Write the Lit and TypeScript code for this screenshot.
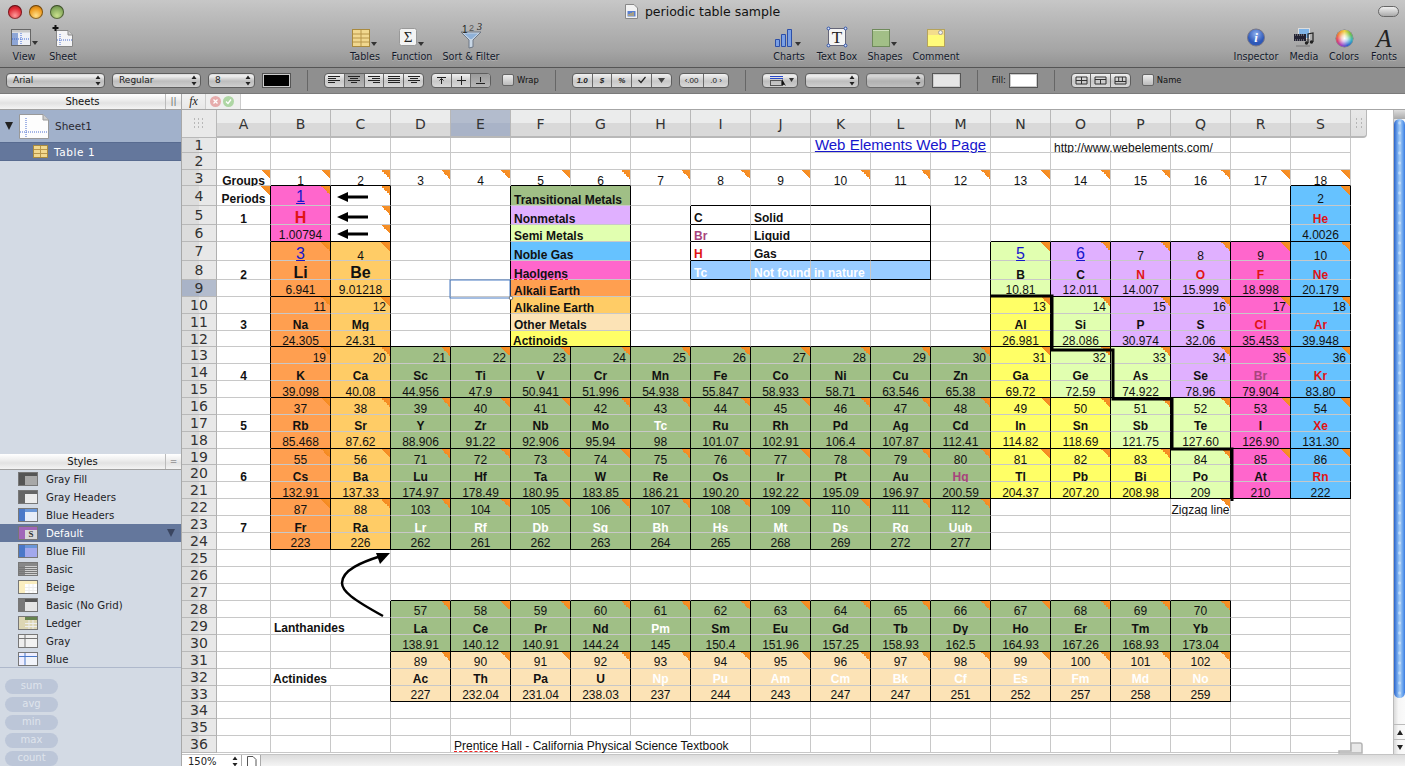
import { LitElement, html, css, svg } from "lit";
import { customElement } from "lit/decorators.js";

type El = [string, string, string, string?];
// sym, mass, bg, symbol colour
const P = "bg-pink", O = "bg-orange", E = "bg-earth", G = "bg-green", V = "bg-purple", S = "bg-semi", N = "bg-noble", Y = "bg-yellow", B = "bg-beige";

interface Cell { text?: unknown; cls?: string; span?: number; tri?: boolean }

// line box height per sheet row: the text of the original sits a little differently in each row
const ROW_LH: Record<number, number> = {
  1: 8, 3: 8, 4: 12, 5: 10, 6: 12, 7: 8, 8: 8, 9: 12, 10: 12, 11: 10, 12: 10, 13: 10, 14: 8, 15: 10, 16: 10, 17: 10, 18: 12,
  19: 8, 20: 8, 21: 10, 22: 10, 23: 8, 24: 12, 28: 12, 29: 10, 30: 12, 31: 12, 32: 12, 33: 12, 36: 12,
};

function buildCells() {
  const cells = new Map<string, Cell>();
  const covered = new Set<string>();
  const br = new Set<string>();
  const bb = new Set<string>();
  const k = (r: number, c: number) => r + ":" + c;
  const put = (r: number, c: number, cell: Cell) => {
    cells.set(k(r, c), cell);
    for (let i = 1; i < (cell.span || 1); i++) covered.add(k(r, c + i));
  };
  const box = (r0: number, r1: number, c0: number, c1: number) => {
    for (let c = c0; c <= c1; c++) { bb.add(k(r0 - 1, c)); bb.add(k(r1, c)); }
    for (let r = r0; r <= r1; r++) { br.add(k(r, c0 - 1)); br.add(k(r, c1)); }
  };
  const element = (r: number, c: number, num: number, e: El, opt: { right?: boolean; link?: boolean; big?: boolean } = {}) => {
    const [sym, mass, bg, col] = e;
    const numCls = `${bg} ${opt.right ? "end" : ""}`;
    const numText = opt.link ? html`<span class="link">${num}</span>` : num;
    put(r, c, { text: numText, cls: numCls, tri: true });
    put(r + 1, c, { text: sym, cls: `${bg} sym ${opt.big ? "big" : ""} ${col || ""}` });
    put(r + 2, c, { text: mass, cls: bg });
    box(r, r + 2, c, c);
  };

  // top rows
  put(1, 10, { text: html`<span class="link web">Web Elements Web Page</span>`, span: 3 });
  put(1, 14, { text: "http://www.webelements.com/", span: 3, cls: "left" });
  put(3, 0, { text: "Groups", cls: "sym", tri: true });
  for (let i = 1; i <= 18; i++) put(3, i, { text: i, tri: true });
  put(4, 0, { text: "Periods", cls: "sym", tri: true });
  [1, 2, 3, 4, 5, 6, 7].forEach((p, i) => put([5, 8, 11, 14, 17, 20, 23][i], 0, { text: p, cls: "sym" }));

  // arrows' cells
  [4, 5, 6].forEach((r) => put(r, 2, { tri: true }));
  box(4, 6, 2, 2);

  // period 1
  put(4, 1, { text: html`<span class="link">1</span>`, cls: `${P} up`, tri: true });
  put(5, 1, { text: "H", cls: `${P} sym big red` });
  put(6, 1, { text: "1.00794", cls: P });
  box(4, 6, 1, 1);
  element(4, 18, 2, ["He", "4.0026", N, "red"]);

  // period 2
  element(7, 1, 3, ["Li", "6.941", O], { link: true, big: true });
  element(7, 2, 4, ["Be", "9.01218", E], { big: true });
  element(7, 13, 5, ["B", "10.81", S], { link: true });
  element(7, 14, 6, ["C", "12.011", V], { link: true });
  element(7, 15, 7, ["N", "14.007", V, "red"]);
  element(7, 16, 8, ["O", "15.999", V, "red"]);
  element(7, 17, 9, ["F", "18.998", P, "red"]);
  element(7, 18, 10, ["Ne", "20.179", N, "red"]);

  // period 3
  element(10, 1, 11, ["Na", "24.305", O], { right: true });
  element(10, 2, 12, ["Mg", "24.31", E], { right: true });
  const p3: [number, El][] = [
    [13, ["Al", "26.981", Y]], [14, ["Si", "28.086", S]], [15, ["P", "30.974", V]],
    [16, ["S", "32.06", V]], [17, ["Cl", "35.453", P, "red"]], [18, ["Ar", "39.948", N, "red"]],
  ];
  p3.forEach(([c, e], i) => element(10, c, 13 + i, e, { right: true }));

  // period 4
  const p4: El[] = [
    ["K", "39.098", O], ["Ca", "40.08", E], ["Sc", "44.956", G], ["Ti", "47.9", G], ["V", "50.941", G], ["Cr", "51.996", G],
    ["Mn", "54.938", G], ["Fe", "55.847", G], ["Co", "58.933", G], ["Ni", "58.71", G], ["Cu", "63.546", G], ["Zn", "65.38", G],
    ["Ga", "69.72", Y], ["Ge", "72.59", S], ["As", "74.922", S], ["Se", "78.96", V], ["Br", "79.904", P, "mag"], ["Kr", "83.80", N, "red"],
  ];
  p4.forEach((e, i) => element(13, i + 1, 19 + i, e, { right: true }));

  // period 5
  const p5: El[] = [
    ["Rb", "85.468", O], ["Sr", "87.62", E], ["Y", "88.906", G], ["Zr", "91.22", G], ["Nb", "92.906", G], ["Mo", "95.94", G],
    ["Tc", "98", G, "white"], ["Ru", "101.07", G], ["Rh", "102.91", G], ["Pd", "106.4", G], ["Ag", "107.87", G], ["Cd", "112.41", G],
    ["In", "114.82", Y], ["Sn", "118.69", Y], ["Sb", "121.75", S], ["Te", "127.60", S], ["I", "126.90", P], ["Xe", "131.30", N, "red"],
  ];
  p5.forEach((e, i) => element(16, i + 1, 37 + i, e));

  // period 6
  const p6: El[] = [
    ["Cs", "132.91", O], ["Ba", "137.33", E], ["Lu", "174.97", G], ["Hf", "178.49", G], ["Ta", "180.95", G], ["W", "183.85", G],
    ["Re", "186.21", G], ["Os", "190.20", G], ["Ir", "192.22", G], ["Pt", "195.09", G], ["Au", "196.97", G], ["Hg", "200.59", G, "mag"],
    ["Tl", "204.37", Y], ["Pb", "207.20", Y], ["Bi", "208.98", Y], ["Po", "209", S], ["At", "210", P], ["Rn", "222", N, "red"],
  ];
  const n6 = [55, 56, 71, 72, 73, 74, 75, 76, 77, 78, 79, 80, 81, 82, 83, 84, 85, 86];
  p6.forEach((e, i) => element(19, i + 1, n6[i], e));

  // period 7
  const p7: El[] = [
    ["Fr", "223", O], ["Ra", "226", E], ["Lr", "262", G, "white"], ["Rf", "261", G, "white"], ["Db", "262", G, "white"], ["Sg", "263", G, "white"],
    ["Bh", "264", G, "white"], ["Hs", "265", G, "white"], ["Mt", "268", G, "white"], ["Ds", "269", G, "white"], ["Rg", "272", G, "white"], ["Uub", "277", G, "white"],
  ];
  const n7 = [87, 88, 103, 104, 105, 106, 107, 108, 109, 110, 111, 112];
  p7.forEach((e, i) => element(22, i + 1, n7[i], e));
  put(22, 16, { text: "Zigzag line", tri: true });

  // lanthanides & actinides
  put(29, 1, { text: "Lanthanides", cls: "sym left leg14", span: 2 });
  put(32, 1, { text: "Actinides", cls: "sym left tight", span: 2 });
  const lan: El[] = [
    ["La", "138.91", G], ["Ce", "140.12", G], ["Pr", "140.91", G], ["Nd", "144.24", G], ["Pm", "145", G, "white"], ["Sm", "150.4", G], ["Eu", "151.96", G],
    ["Gd", "157.25", G], ["Tb", "158.93", G], ["Dy", "162.5", G], ["Ho", "164.93", G], ["Er", "167.26", G], ["Tm", "168.93", G], ["Yb", "173.04", G],
  ];
  lan.forEach((e, i) => element(28, i + 3, 57 + i, e));
  const act: El[] = [
    ["Ac", "227", B], ["Th", "232.04", B], ["Pa", "231.04", B], ["U", "238.03", B], ["Np", "237", B, "white"], ["Pu", "244", B, "white"], ["Am", "243", B, "white"],
    ["Cm", "247", B, "white"], ["Bk", "247", B, "white"], ["Cf", "251", B, "white"], ["Es", "252", B, "white"], ["Fm", "257", B, "white"], ["Md", "258", B, "white"], ["No", "259", B, "white"],
  ];
  act.forEach((e, i) => element(31, i + 3, 89 + i, e));

  // legend
  const legend: [string, string][] = [
    ["Transitional Metals", G], ["Nonmetals", V], ["Semi Metals", S], ["Noble Gas", N], ["Haolgens", P],
    ["Alkali Earth", O], ["Alkaline Earth", E], ["Other Metals", B], ["Actinoids", Y],
  ];
  legend.forEach(([t, bg], i) => {
    const content = t === "Haolgens" ? html`<span class="spell">${t}</span>` : t;
    put(4 + i, 5, { text: content, cls: `${bg} sym left leg ${t === "Actinoids" ? "tight" : ""}`, span: 2 });
  });
  box(4, 12, 5, 6);

  // state key
  const key: [string, string, string][] = [["C", "Solid", ""], ["Br", "Liquid", "mag"], ["H", "Gas", "red"], ["Tc", "Not found in nature", "white"]];
  key.forEach(([a, b, col], i) => {
    const r = 5 + i;
    const fill = i === 3 ? "bg-sky" : "";
    const lh = i === 1 ? "leg" : "leg14";
    put(r, 8, { text: a, cls: `sym left ${lh} ${col} ${fill}` });
    put(r, 9, { text: b, cls: `sym left ${lh} ${i === 3 ? "white" : ""} ${fill} over` });
    put(r, 10, { cls: fill });
    put(r, 11, { cls: fill });
    box(r, r, 8, 11);
    for (let c = 8; c < 11; c++) br.delete(k(r, c));
  });

  // credit
  put(36, 4, { text: html`<span><span class="spell">Prentice</span> Hall - California Physical Science Textbook</span>`, cls: "left over", span: 5 });

  return { cells, covered, br, bb, k };
}

const arrowDown = (x: number, y: number) => svg`<polygon points="${x},${y} ${x + 6},${y} ${x + 3},${y + 4}" fill="#333"/>`;

const icons: Record<string, unknown> = {
  view: html`<svg width="28" height="26" viewBox="0 0 28 26"><rect x="1.5" y="6.5" width="19" height="16" fill="#eef0f6" stroke="#666"/><rect x="2" y="10" width="6" height="12" fill="#8ea6d6"/><rect x="2" y="7" width="18" height="2.5" fill="#c8c8c8"/><path d="M11 10V22M2 16H20" stroke="#3d66d4" stroke-dasharray="1 1"/>${arrowDown(22, 18)}</svg>`,
  sheet: html`<svg width="24" height="26" viewBox="0 0 24 26"><path d="M5.5 7.5H17L21.5 12V23.5H5.5Z" fill="#f4f4f6" stroke="#888"/><path d="M17 7.5V12H21.5" fill="#ccc" stroke="#888"/><path d="M9 11V23M6 17H21" stroke="#4a6fd0" stroke-dasharray="1 1"/><path d="M4.5 2V8M1.5 5H7.5" stroke="#111" stroke-width="2"/></svg>`,
  tables: html`<svg width="26" height="26" viewBox="0 0 26 26"><rect x=".5" y="6.5" width="17" height="17" fill="#f1d88f" stroke="#a98a3e"/><path d="M1 11H17M1 15H17M1 19H17M9 7V23" stroke="#b8964a"/>${arrowDown(19, 19)}</svg>`,
  fn: html`<svg width="26" height="26" viewBox="0 0 26 26"><rect x=".5" y="5.5" width="17" height="17" rx="2" fill="#f3f3f3" stroke="#999"/><text x="9" y="19" text-anchor="middle" font-family="Liberation Serif" font-size="15" fill="#222">Σ</text>${arrowDown(19, 19)}</svg>`,
  sort: html`<svg width="30" height="26" viewBox="0 0 30 26"><path d="M5 9H25L17 17V24L13 25V17Z" fill="#c9d7e6" stroke="#6d7785"/><path d="M8 10.5H22L16 16H14Z" fill="#8fb1d8"/><text x="6" y="10" font-family="Liberation Sans" font-size="10" fill="#222">1</text><text x="13" y="8" font-family="Liberation Sans" font-size="9" fill="#555">2</text><text x="21" y="7" font-family="Liberation Serif" font-style="italic" font-size="10" fill="#222">3</text></svg>`,
  charts: html`<svg width="30" height="26" viewBox="0 0 30 26"><path d="M1.5 16.5h4v7h-4zM7.5 11.5h4v12h-4zM13.5 6.5h4v17h-4z" fill="#7ba0e4" stroke="#2c4fa8"/>${arrowDown(21, 19)}</svg>`,
  text: html`<svg width="24" height="26" viewBox="0 0 24 26"><rect x="3.5" y="5.5" width="17" height="17" fill="#f4f4f4" stroke="#667"/><text x="12" y="20" text-anchor="middle" font-family="Liberation Serif" font-size="17" fill="#222">T</text><g fill="#dfe8f8" stroke="#2c4fa8"><circle cx="3.5" cy="5.5" r="1.4"/><circle cx="20.5" cy="5.5" r="1.4"/><circle cx="3.5" cy="22.5" r="1.4"/><circle cx="20.5" cy="22.5" r="1.4"/></g></svg>`,
  shapes: html`<svg width="26" height="26" viewBox="0 0 26 26"><rect x=".5" y="6.5" width="17" height="17" fill="#a2bf87" stroke="#6f8a5b"/><path d="M1 7.5H17" stroke="#cfe0be"/>${arrowDown(19, 19)}</svg>`,
  comment: html`<svg width="20" height="26" viewBox="0 0 20 26"><rect x="1.5" y="6.5" width="17" height="17" fill="#fffb7a" stroke="#b5a35a"/><rect x="2" y="7" width="16" height="5" fill="#f3dc8c"/><circle cx="14.5" cy="9.5" r="2" fill="#eee" stroke="#888" stroke-width=".7"/></svg>`,
  inspector: html`<svg width="20" height="26" viewBox="0 0 20 26"><defs><radialGradient id="ib" cy=".3"><stop offset="0" stop-color="#8fb0ee"/><stop offset="1" stop-color="#2e58b8"/></radialGradient></defs><circle cx="10" cy="14.5" r="8.5" fill="url(#ib)" stroke="#778"/><text x="10" y="19" text-anchor="middle" font-family="Liberation Serif" font-weight="bold" font-style="italic" font-size="13" fill="#fff">i</text></svg>`,
  media: html`<svg width="22" height="26" viewBox="0 0 22 26"><rect x="5.5" y="5.5" width="11" height="10" fill="#7fb4e8" stroke="#ddd"/><rect x="1" y="11" width="12" height="7" fill="#223"/><path d="M2 12h10M2 17h10" stroke="#aaa" stroke-dasharray="1 1"/><path d="M15 20V11L20 10V19" fill="none" stroke="#222" stroke-width="1.2"/><circle cx="13.5" cy="20" r="1.7" fill="#222"/><circle cx="18.5" cy="19" r="1.7" fill="#222"/><path d="M3 23H17" stroke="#777"/></svg>`,
  fonts: html`<svg width="24" height="26" viewBox="0 0 24 26"><text x="12" y="23.5" text-anchor="middle" font-family="Liberation Serif" font-style="italic" font-size="25" fill="#222">A</text></svg>`,
};

const alignIcon = (lens: [number, number][]) => html`<svg width="12" height="10" viewBox="0 0 12 10">${lens.map(([x, w], i) => svg`<rect x="${x}" y="${i * 2 + 1}" width="${w}" height="1" fill="#222"/>`)}</svg>`;

const chevrons = html`<svg class="chev" width="6" height="11" viewBox="0 0 6 11"><path d="M3 .5L5.5 4H.5ZM3 10.5L.5 7H5.5Z" fill="#222"/></svg>`;

const tools1 = [{ l: "View", i: "view", w: 40 }, { l: "Sheet", i: "sheet", w: 38 }];
const tools2 = [{ l: "Tables", i: "tables", w: 46 }, { l: "Function", i: "fn", w: 48 }, { l: "Sort & Filter", i: "sort", w: 70 }];
const tools3 = [{ l: "Charts", i: "charts", w: 46 }, { l: "Text Box", i: "text", w: 50 }, { l: "Shapes", i: "shapes", w: 46 }, { l: "Comment", i: "comment", w: 56 }];
const tools4 = [{ l: "Inspector", i: "inspector", w: 56 }, { l: "Media", i: "media", w: 40 }, { l: "Colors", i: "colors", w: 40 }, { l: "Fonts", i: "fonts", w: 40 }];

const styles: [string, string, string, string, string?][] = [
  ["Gray Fill", "#555", "#555", "#a8a8a8"],
  ["Gray Headers", "#666", "#666", "#ececec"],
  ["Blue Headers", "#6a96d8", "#4a78c8", "#e6ecf8"],
  ["Default", "#a066b8", "#a066b8", "#d8d8d8", "S"],
  ["Blue Fill", "#6a96d8", "#4a78c8", "#a2a8ec"],
  ["Basic", "#888", "#888", "#d0d0d0", "lines"],
  ["Beige", "#fbeec0", "#fbeec0", "#fff", "grid"],
  ["Basic (No Grid)", "#555", "#777", "#e4e4e4"],
  ["Ledger", "#66834e", "#ddd6b4", "#ddd6b4", "grid"],
  ["Gray", "#eee", "#eee", "#f2f2f2", "gl"],
  ["Blue", "#eef", "#eef", "#f2f4fa", "bl"],
];

const styleIcon = (s: (typeof styles)[number]) => html`<svg width="20" height="14" viewBox="0 0 20 14"><rect x=".5" y=".5" width="19" height="13" fill="${s[3]}" stroke="#777"/><rect x="1" y="1" width="18" height="3" fill="${s[1]}"/><rect x="1" y="1" width="6" height="12" fill="${s[2]}"/>${
  s[4] === "S" ? svg`<text x="13" y="11" text-anchor="middle" font-family="Liberation Serif" font-weight="bold" font-size="9" fill="#333">S</text>` :
  s[4] === "lines" ? svg`<path d="M1 5.5H19M1 7.5H19M1 9.5H19M1 11.5H19" stroke="#777"/>` :
  s[4] === "grid" ? svg`<path d="M7 7.5H19M7 10.5H19M11 4V13M15 4V13" stroke="#eee"/>` :
  s[4] === "bl" ? svg`<path d="M1 4.5H19M7 1V13" stroke="#4a78c8"/>` :
  s[4] === "gl" ? svg`<path d="M1 4.5H19M7 1V13" stroke="#777"/>` : ""
}</svg>`;

@customElement("app-root")
export class AppRoot extends LitElement {
  static styles = css`
    :host { display: block; width: 1405px; height: 766px; overflow: hidden; font-family: "DejaVu Sans", sans-serif; background: #fff; }
    .window { display: flex; flex-direction: column; height: 766px; }
    .toolbar { height: 67px; flex: none; background: linear-gradient(#c7c7c7, #bdbdbd 20%, #b2b2b2 45%, #a5a5a5 75%, #939393); }
    .titlebar { height: 23px; display: grid; grid-template-columns: 1fr auto 1fr; align-items: center; }
    .lights { display: flex; gap: 7px; padding-left: 8px; }
    .light { width: 14px; height: 14px; border-radius: 50%; box-shadow: inset 0 0 0 1px rgba(0,0,0,.45); }
    .l-r { background: radial-gradient(circle at 50% 75%, #ff9a9a, #e02b36 55%, #8c0f18); }
    .l-y { background: radial-gradient(circle at 50% 75%, #ffe08a, #ee9a1e 55%, #9c5a08); }
    .l-g { background: radial-gradient(circle at 50% 75%, #c9e08c, #82a65a 60%, #4f6b34); }
    .title { display: flex; align-items: center; gap: 7px; font-size: 12.5px; color: #111; }
    .pill { justify-self: end; margin-right: 6px; width: 19px; height: 9px; border: 1px solid #666; border-radius: 6px; background: linear-gradient(#f0f0f0, #aaa); }
    .tools { display: flex; height: 44px; padding-left: 4px; }
    .group { display: flex; }
    .g2 { margin-left: 260px; }
    .g3 { margin-left: 260px; }
    .g4 { margin-left: 264px; }
    .tool { display: flex; flex-direction: column; align-items: center; }
    .tool svg, .wheel-box { display: block; height: 26px; overflow: visible; }
    .tool span { font-size: 9.6px; line-height: 12px; margin-top: 2px; color: #11182a; white-space: nowrap; text-shadow: 0 1px 0 rgba(255,255,255,.25); }
    .wheel-box { display: flex; align-items: flex-end; padding-bottom: 2px; box-sizing: border-box; }
    .wheel { width: 17px; height: 17px; border-radius: 50%; background: radial-gradient(circle, #fff 0, rgba(255,255,255,.7) 25%, rgba(255,255,255,0) 62%), conic-gradient(#f0d040, #70c040, #30b0c0, #3060d0, #a040c0, #e04060, #f08030, #f0d040); box-shadow: 0 0 0 .5px #777; }

    .fbar { height: 27px; flex: none; background: #8f8f8f; border-top: 1px solid #555; border-bottom: 1px solid #7a7a7a; box-sizing: border-box; display: flex; align-items: center; font-size: 9.5px; color: #111; padding-bottom: 1px; }
    .sel { height: 15px; box-sizing: border-box; border: 1px solid #5e5e5e; border-radius: 4px; background: linear-gradient(#dadada, #f0f0f0 15%, #bdbdbd 55%, #cfcfcf); display: flex; align-items: center; justify-content: space-between; padding: 0 3px 0 6px; font-size: 9px; color: #222; }
    .sel.off { opacity: .75; }
    .well { height: 15px; box-sizing: border-box; border: 1px solid #555; padding: 1px; background: #ccc; }
    .well i { display: block; height: 100%; }
    .sep { width: 1px; height: 21px; background: #666; }
    .seg { display: flex; height: 15px; box-sizing: border-box; border: 1px solid #5e5e5e; border-radius: 4px; background: linear-gradient(#f2f2f2, #c8c8c8 55%, #d8d8d8); overflow: hidden; }
    .seg > div { flex: 1; display: flex; align-items: center; justify-content: center; border-right: 1px solid #6a6a6a; font: italic bold 8px "Liberation Sans", sans-serif; color: #222; }
    .seg > div:last-child { border-right: 0; }
    .seg .on { background: linear-gradient(#9b9b9b, #b6b6b6); }
    .chk { width: 10px; height: 10px; border: 1px solid #666; border-radius: 2px; background: linear-gradient(#eee, #bbb); }
    .lbl { font-size: 8.4px; color: #111; margin-left: 3px; }
    .m6 { margin-left: 6px; } .m7 { margin-left: 7px; } .m11 { margin-left: 11px; } .m12 { margin-left: 12px; } .m14 { margin-left: 14px; } .m16 { margin-left: 16px; } .m3 { margin-left: 3px; }
    .w99 { width: 99px; } .w89 { width: 89px; } .w47 { width: 47px; } .w29 { width: 29px; } .w100 { width: 100px; } .w60 { width: 60px; } .w50 { width: 50px; } .w36 { width: 36px; } .w54 { width: 54px; } .w59 { width: 59px; }
    .seg .plain { font: 8px "Liberation Sans", sans-serif; }

    .body { flex: 1; min-height: 0; display: flex; }
    .side { width: 182px; flex: none; display: flex; flex-direction: column; background: #d3dae4; border-right: 1px solid #a8a8a8; box-sizing: border-box; }
    .pane-head { height: 16px; flex: none; display: flex; align-items: center; background: linear-gradient(#fff, #eee 40%, #e2e2e2 60%, #f4f4f4); border-bottom: 1px solid #a0a0a0; box-sizing: border-box; font-size: 10px; color: #111; }
    .pane-head b { font-weight: 400; flex: 1; text-align: center; }
    .pane-head i { width: 15px; height: 100%; border-left: 1px solid #bbb; text-align: center; font-style: normal; color: #666; font-size: 9px; line-height: 14px; }
    .sheets { height: 344px; flex: none; font-size: 10.5px; }
    .sheet-row { height: 32px; background: #a1b1cb; display: flex; align-items: center; color: #2a2a33; gap: 6px; padding-left: 5px; box-sizing: border-box; }
    .tri-d { width: 0; height: 0; border-left: 4px solid transparent; border-right: 4px solid transparent; border-top: 8px solid #222; margin-right: 0; }
    .table-row { height: 19px; background: #64779c; display: flex; align-items: center; color: #fff; padding-left: 33px; gap: 6px; border-top: 1px solid #586b90; border-bottom: 1px solid #586b90; box-sizing: border-box; letter-spacing: .6px; }
    .styles { flex: 1; display: flex; flex-direction: column; }
    .style-list { border-bottom: 1px solid #aeb8cb; height: 198px; box-sizing: border-box; }
    .style-row { height: 18px; display: flex; align-items: center; padding-left: 18px; gap: 8px; font-size: 10.2px; color: #1e1e26; }
    .style-row.on { background: #64779c; color: #fff; justify-content: flex-start; }
    .style-row.on::after { content: ""; margin-left: auto; margin-right: 6px; border-left: 4px solid transparent; border-right: 4px solid transparent; border-top: 8px solid #3a4560; }
    .pills { display: flex; flex-direction: column; gap: 3px; padding: 11px 0 0 5px; }
    .calc { width: 53px; height: 15px; border-radius: 8px; background: #bcc6d8; color: #dfe4ec; text-align: center; font-size: 10px; line-height: 14px; }

    .main { flex: 1; min-width: 0; display: flex; flex-direction: column; }
    .formula { height: 16px; flex: none; display: flex; align-items: center; background: #fff; border-bottom: 1px solid #a6a6a6; box-sizing: border-box; }
    .fx { width: 24px; height: 100%; background: linear-gradient(#f2f2f2, #e8e8e8); border-right: 1px solid #ccc; box-sizing: border-box; text-align: center; font: italic 12px/14px "Liberation Serif", serif; color: #222; }
    .fbtns { width: 35px; height: 100%; background: #efefef; border-right: 1px solid #ccc; box-sizing: border-box; display: flex; align-items: center; gap: 2px; padding-left: 4px; }
    .area { flex: 1; min-height: 0; display: flex; position: relative; }
    .grid { width: 1185px; flex: none; display: grid; grid-template-columns: 35px 54px repeat(18, 60px) 16px; grid-template-rows: 28px 15px 17px 16px 20px 19px 17px 19px 19px 17px 17px 17px 16px repeat(6, 17px) 16px repeat(13, 17px) 16px repeat(3, 17px); font: 12px/10px "Liberation Sans", sans-serif; color: #111; }
    .corner { background: #e9e9e9; border-right: 1px solid #b8b8b8; border-bottom: 1px solid #b8b8b8; display: flex; align-items: center; justify-content: center; }
    .ch { border-right: 1px solid #b8b8b8; border-bottom: 2px solid #b8b8b8; background: linear-gradient(#ebecec 50%, #d9d9d9 50%); display: flex; align-items: center; justify-content: center; font: 14px/1 "DejaVu Sans", sans-serif; color: #333; box-sizing: border-box; padding-top: 1px; }
    .ch.hi { background: linear-gradient(#b3bccd 50%, #a9b3c7 50%); }
    .ch.end { border-radius: 0 0 4px 0; background: linear-gradient(#e8e8e8, #dedede); font-size: 10px; }
    .rh { background: linear-gradient(90deg, #dcdcdc 50%, #e8e8e8 50%); border-right: 1px solid #b0b0b0; border-bottom: 1px solid #b8b8b8; box-sizing: border-box; display: flex; align-items: center; justify-content: center; font: 14px/1 "DejaVu Sans", sans-serif; color: #333; overflow: hidden; }
    .rh.hi { background: linear-gradient(90deg, #a9b3c7 50%, #b3bccd 50%); }
    .cell { box-sizing: border-box; min-width: 0; min-height: 0; border-right: 1px solid #c8c8c8; border-bottom: 1px solid #c8c8c8; display: flex; align-items: flex-end; justify-content: center; white-space: nowrap; background-color: #fff; }
    .cell.end { justify-content: flex-end; padding-right: 4px; }
    .cell.left { justify-content: flex-start; padding-left: 3px; }
    .cell.left.tight { padding-left: 2px; }
    .cell.sym { font-weight: 700; }
    .cell.lh8 { line-height: 8px; }
    .cell.lh10 { line-height: 10px; }
    .cell.lh12 { line-height: 12px; }
    .cell.leg { line-height: 10px; }
    .cell.leg14 { line-height: 12px; }
    .cell.big { font-size: 16px; line-height: 12px; }
    .cell.br { border-right-color: #000; }
    .cell.bb { border-bottom-color: #000; }
    .cell.tri { background-image: linear-gradient(45deg, transparent 50%, #f58a20 50%, #f7952e); background-size: 9px 9px; background-position: right 0 top 0; background-repeat: no-repeat; }
    .cell.over { z-index: 1; }
    .gutter { background: #fff; }
    .link { color: #1616cc; text-decoration: underline; font-size: 16px; line-height: 13px; }
    .up .link { line-height: 16px; }
    .link.web { font-size: 15px; line-height: 15px; }
    .spell { text-decoration: underline dashed #e22; text-underline-offset: 1px; }
    .red { color: #e01414; } .white { color: #fff; } .mag { color: #a8447c; }
    .bg-pink { background-color: #ff66cc; } .bg-orange { background-color: #ff9f50; } .bg-earth { background-color: #ffcc66; }
    .bg-green { background-color: #a0bf86; } .bg-purple { background-color: #e0b0ff; } .bg-semi { background-color: #e1ffb0; }
    .bg-noble { background-color: #66c2ff; } .bg-yellow { background-color: #ffff66; } .bg-beige { background-color: #fce3b6; }
    .bg-sky { background-color: #99ccff; }
    .overlay { position: absolute; left: 0; top: 0; pointer-events: none; }
    .blank { flex: 1; background: #fff; }
    .sb { width: 12px; flex: none; background: linear-gradient(90deg, #dadada, #f6f6f6 40%, #fafafa); border-left: 1px solid #bbb; display: flex; flex-direction: column; box-sizing: border-box; }
    .sb-top { height: 9px; background: linear-gradient(#ddd, #aaa); }
    .thumb { height: 579px; background: radial-gradient(circle at 50% 4px, rgba(255,255,255,.35) 1px, transparent 2px) 0 0/100% 10px, linear-gradient(90deg, #2a62c8, #79aef0 35%, #a7cdf6 55%, #5d9bec 85%, #3c7ade); border-radius: 6px; }
    .sb-track { flex: 1; }
    .sb-btn { height: 14px; border-top: 1px solid #bbb; display: flex; align-items: center; justify-content: center; }
    .ar-up { border-left: 3px solid transparent; border-right: 3px solid transparent; border-bottom: 5px solid #222; }
    .ar-dn { border-left: 3px solid transparent; border-right: 3px solid transparent; border-top: 5px solid #222; }
    .bottom { height: 12px; flex: none; display: flex; background: linear-gradient(#dcdcdc, #f4f4f4); border-top: 1px solid #c4c4c4; box-sizing: border-box; font-size: 10px; color: #222; }
    .zoom { width: 60px; background: #fff; border-right: 1px solid #aaa; display: flex; align-items: center; justify-content: space-between; padding: 2px 3px 0 6px; box-sizing: border-box; line-height: 9px; }
    .newsheet { width: 19px; background: #fff; border-right: 1px solid #aaa; display: flex; justify-content: center; padding-top: 1px; box-sizing: border-box; }
  `;

  private tool(t: { l: string; i: string; w: number }) {
    return html`<div class="tool" style="width:${t.w}px">
      ${t.i === "colors" ? html`<div class="wheel-box"><div class="wheel"></div></div>` : icons[t.i]}
      <span>${t.l}</span>
    </div>`;
  }

  render() {
    const { cells, covered, br, bb, k } = buildCells();
    const letters = "ABCDEFGHIJKLMNOPQRS".split("");
    const rows: unknown[] = [];
    for (let r = 1; r <= 36; r++) {
      rows.push(html`<div class="rh ${r === 9 ? "hi" : ""}">${r}</div>`);
      const lh = `lh${ROW_LH[r] || 10}`;
      for (let c = 0; c < 19; c++) {
        if (covered.has(k(r, c))) continue;
        const cell = cells.get(k(r, c)) || {};
        const span = cell.span || 1;
        const last = c + span - 1;
        const cls = `cell ${lh} ${cell.cls || ""} ${cell.tri ? "tri" : ""} ${br.has(k(r, last)) ? "br" : ""} ${bb.has(k(r, c)) ? "bb" : ""}`;
        rows.push(span > 1
          ? html`<div class="${cls}" style="grid-column: span ${span}">${cell.text}</div>`
          : html`<div class="${cls}">${cell.text}</div>`);
      }
      rows.push(html`<div class="gutter"></div>`);
    }
    const L: [number, number][] = [[0, 12], [0, 8], [0, 12], [0, 7]];
    const C: [number, number][] = [[0, 12], [2, 8], [0, 12], [3, 6]];
    const R: [number, number][] = [[0, 12], [4, 8], [0, 12], [5, 7]];
    const J: [number, number][] = [[0, 12], [0, 12], [0, 12], [0, 12]];
    return html`<div class="window">
      <div class="toolbar">
        <div class="titlebar">
          <div class="lights"><div class="light l-r"></div><div class="light l-y"></div><div class="light l-g"></div></div>
          <div class="title">
            <svg width="13" height="15" viewBox="0 0 13 15"><path d="M.5.5H9L12.5 4V14.5H.5Z" fill="#f2f2f2" stroke="#888"/><rect x="2.5" y="7" width="8" height="5.5" fill="#5a7fd0"/><path d="M4 12V10M6 12V9M8 12V8" stroke="#f0c040"/></svg>
            periodic table sample
          </div>
          <div class="pill"></div>
        </div>
        <div class="tools">
          <div class="group">${tools1.map((t) => this.tool(t))}</div>
          <div class="group g2">${tools2.map((t) => this.tool(t))}</div>
          <div class="group g3">${tools3.map((t) => this.tool(t))}</div>
          <div class="group g4">${tools4.map((t) => this.tool(t))}</div>
        </div>
      </div>

      <div class="fbar">
        <div class="sel w99 m6"><span>Arial</span>${chevrons}</div>
        <div class="sel w89 m7"><span>Regular</span>${chevrons}</div>
        <div class="sel w47 m7"><span>8</span>${chevrons}</div>
        <div class="well w29 m7"><i style="background:#000"></i></div>
        <div class="sep m16"></div>
        <div class="seg w100 m16">
          <div>${alignIcon(L)}</div><div class="on">${alignIcon(C)}</div><div>${alignIcon(R)}</div><div>${alignIcon(J)}</div><div>${alignIcon(C)}</div>
        </div>
        <div class="seg w60 m7">
          <div><svg width="11" height="9" viewBox="0 0 11 9"><path d="M1 1.5H10M5.5 8V3M3.5 4.5L5.5 2.5L7.5 4.5" stroke="#222" fill="none"/></svg></div>
          <div><svg width="11" height="9" viewBox="0 0 11 9"><path d="M1 4.5H10M5.5 0V9" stroke="#222" fill="none"/></svg></div>
          <div class="on"><svg width="11" height="9" viewBox="0 0 11 9"><path d="M1 7.5H10M5.5 1V6" stroke="#222" fill="none"/></svg></div>
        </div>
        <div class="chk m11"></div><span class="lbl">Wrap</span>
        <div class="sep m16"></div>
        <div class="seg w100 m16">
          <div>1.0</div><div>$</div><div>%</div>
          <div><svg width="10" height="8" viewBox="0 0 10 8"><path d="M1.5 4L4 6.5L8.5 1" stroke="#222" fill="none" stroke-width="1.2"/></svg></div>
          <div><svg width="7" height="5" viewBox="0 0 7 5"><path d="M0 0H7L3.5 5Z" fill="#444"/></svg></div>
        </div>
        <div class="seg w50 m7"><div class="plain">‹.00</div><div class="plain">.0 ›</div></div>
        <div class="sep m16"></div>
        <div class="sel w36 m16"><svg width="20" height="11" viewBox="0 0 20 11"><path d="M1 1.5H14M1 3.5H14" stroke="#2848c8"/><rect x="1.5" y="5.5" width="11" height="5" fill="none" stroke="#555"/><path d="M13 4V11L15 9.5L17 11Z" fill="#111"/></svg><svg width="5" height="4" viewBox="0 0 5 4"><path d="M0 0H5L2.5 4Z" fill="#333"/></svg></div>
        <div class="sel w54 m7"><span></span>${chevrons}</div>
        <div class="sel off w59 m7"><span></span>${chevrons}</div>
        <div class="well w29 m7"><i style="background:#e6e6e6"></i></div>
        <div class="sep m16"></div>
        <span class="lbl m14">Fill:</span>
        <div class="well w29 m3"><i style="background:#fff"></i></div>
        <div class="sep m16"></div>
        <div class="seg w60 m16">
          ${["M0 0h11v7H0zM5.5 0v7M0 3.5h11", "M0 0h11v7H0zM0 2.5h11M5.5 2.5v4.5", "M0 0h11v7H0zM0 4.5h11M3.7 0v4.5M7.4 0v4.5"].map((d) => html`<div><svg width="13" height="9" viewBox="-1 -1 13 9"><path d="${d}" fill="none" stroke="#333"/></svg></div>`)}
        </div>
        <div class="chk m11"></div><span class="lbl">Name</span>
      </div>

      <div class="body">
        <div class="side">
          <div class="pane-head"><b>Sheets</b><i>||</i></div>
          <div class="sheets">
            <div class="sheet-row"><div class="tri-d"></div>
              <svg width="30" height="25" viewBox="0 0 30 25"><path d="M.5.5H24L29.5 6V24.5H.5Z" fill="#fdfdfd" stroke="#999"/><path d="M24 .5V6H29.5" fill="#ccc" stroke="#999"/><path d="M7 4V24M1 18H29" stroke="#4a6fd0" stroke-dasharray="1 1"/></svg>
              <span>Sheet1</span></div>
            <div class="table-row"><svg width="15" height="13" viewBox="0 0 15 13"><rect x=".5" y=".5" width="14" height="12" fill="#f1d88f" stroke="#a98a3e"/><path d="M1 4.5H14M1 8.5H14M7.5 1V12" stroke="#b8964a"/></svg><span>Table 1</span></div>
          </div>
          <div class="styles">
            <div class="pane-head"><b>Styles</b><i>=</i></div>
            <div class="style-list">
              ${styles.map((s) => html`<div class="style-row ${s[0] === "Default" ? "on" : ""}">${styleIcon(s)}<span>${s[0]}</span></div>`)}
            </div>
            <div class="pills">${["sum", "avg", "min", "max", "count"].map((p) => html`<div class="calc">${p}</div>`)}</div>
          </div>
        </div>

        <div class="main">
          <div class="formula">
            <div class="fx">fx</div>
            <div class="fbtns">
              <svg width="11" height="11" viewBox="0 0 11 11"><circle cx="5.5" cy="5.5" r="5.5" fill="#e6acac"/><path d="M3.5 3.5L7.5 7.5M7.5 3.5L3.5 7.5" stroke="#fff" stroke-width="1.3"/></svg>
              <svg width="11" height="11" viewBox="0 0 11 11"><circle cx="5.5" cy="5.5" r="5.5" fill="#aed6a4"/><path d="M3 5.5L5 7.5L8 3.5" stroke="#fff" fill="none" stroke-width="1.3"/></svg>
            </div>
          </div>
          <div class="area">
            <div class="grid">
              <div class="corner"><svg width="12" height="12" viewBox="0 0 12 12"><path d="M1 1h1M5 1h1M9 1h1M1 5h1M5 5h1M9 5h1M1 9h1M5 9h1M9 9h1" stroke="#888" stroke-width="1.2"/></svg></div>
              ${letters.map((l) => html`<div class="ch ${l === "E" ? "hi" : ""}">${l}</div>`)}
              <div class="ch end"><svg width="8" height="12" viewBox="0 0 8 12"><path d="M1 1h1M6 1h1M1 5h1M6 5h1M1 9h1M6 9h1" stroke="#888" stroke-width="1.2"/></svg></div>
              ${rows}
            </div>
            <svg class="overlay" width="1210" height="644" viewBox="182 110 1210 644">
              <rect x="450" y="280" width="60" height="18" fill="none" stroke="#4a7cc4"/>
              <circle cx="511" cy="298" r="1.8" fill="#fff" stroke="#777"/>
              <polyline points="990,296 1052,296 1052,350 1113,350 1113,399 1172,399 1172,449 1232,449 1232,501" fill="none" stroke="#000" stroke-width="3"/>
              <g fill="#000" stroke="#000">
                <path d="M346 197H368M346 217H368M346 234H368" stroke-width="3" fill="none"/>
                <path d="M337 197L348 192V202ZM337 217L348 212V222ZM337 234L348 229V239Z" stroke="none"/>
              </g>
              <path d="M383 616C352 599 342 591 342 583C342 570 362 562 381 556" fill="none" stroke="#000" stroke-width="2.5"/>
              <path d="M390 553L380 564L376 553Z" fill="#000"/>
              <path d="M1339 753V751H1351V743H1360Q1362 743 1362 745V753Z" fill="#e8e8e8" stroke="#b4b4b4" stroke-width="1.5"/>
            </svg>
            <div class="blank"></div>
            <div class="sb">
              <div class="sb-top"></div>
              <div class="thumb"></div>
              <div class="sb-track"></div>
              <div class="sb-btn"><div class="ar-up"></div></div>
              <div class="sb-btn"><div class="ar-dn"></div></div>
            </div>
          </div>
          <div class="bottom">
            <div class="zoom"><span>150%</span>${chevrons}</div>
            <div class="newsheet"><svg width="11" height="11" viewBox="0 0 11 11"><path d="M1.5.5H7L10 3.5V11H1.5Z" fill="#fff" stroke="#555"/></svg></div>
          </div>
        </div>
      </div>
    </div>`;
  }
}
